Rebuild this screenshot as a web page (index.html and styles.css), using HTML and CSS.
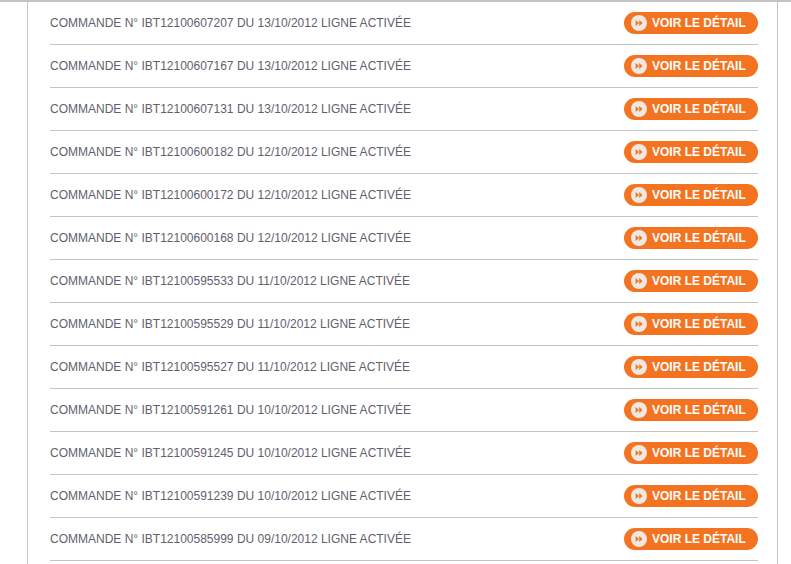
FILE: index.html
```html
<!DOCTYPE html>
<html lang="fr">
<head>
  <meta charset="UTF-8" />
  <title>Mes commandes</title>
  <link rel="stylesheet" href="styles.css">
</head>
<body>
  <main class="panel">
    <ul class="orders">
      <li class="order"><span class="order-text">COMMANDE N° IBT12100607207 DU 13/10/2012 LIGNE ACTIVÉE</span><a class="btn" href="#"><svg class="btn-icon" width="16" height="16" viewBox="0 0 16 16"><circle cx="8" cy="8" r="8" fill="#f0e8e2"/><path d="M4.6 5v6L8 8zM8.2 5v6L11.6 8z" fill="#f47320"/></svg>VOIR LE DÉTAIL</a></li>
      <li class="order"><span class="order-text">COMMANDE N° IBT12100607167 DU 13/10/2012 LIGNE ACTIVÉE</span><a class="btn" href="#"><svg class="btn-icon" width="16" height="16" viewBox="0 0 16 16"><circle cx="8" cy="8" r="8" fill="#f0e8e2"/><path d="M4.6 5v6L8 8zM8.2 5v6L11.6 8z" fill="#f47320"/></svg>VOIR LE DÉTAIL</a></li>
      <li class="order"><span class="order-text">COMMANDE N° IBT12100607131 DU 13/10/2012 LIGNE ACTIVÉE</span><a class="btn" href="#"><svg class="btn-icon" width="16" height="16" viewBox="0 0 16 16"><circle cx="8" cy="8" r="8" fill="#f0e8e2"/><path d="M4.6 5v6L8 8zM8.2 5v6L11.6 8z" fill="#f47320"/></svg>VOIR LE DÉTAIL</a></li>
      <li class="order"><span class="order-text">COMMANDE N° IBT12100600182 DU 12/10/2012 LIGNE ACTIVÉE</span><a class="btn" href="#"><svg class="btn-icon" width="16" height="16" viewBox="0 0 16 16"><circle cx="8" cy="8" r="8" fill="#f0e8e2"/><path d="M4.6 5v6L8 8zM8.2 5v6L11.6 8z" fill="#f47320"/></svg>VOIR LE DÉTAIL</a></li>
      <li class="order"><span class="order-text">COMMANDE N° IBT12100600172 DU 12/10/2012 LIGNE ACTIVÉE</span><a class="btn" href="#"><svg class="btn-icon" width="16" height="16" viewBox="0 0 16 16"><circle cx="8" cy="8" r="8" fill="#f0e8e2"/><path d="M4.6 5v6L8 8zM8.2 5v6L11.6 8z" fill="#f47320"/></svg>VOIR LE DÉTAIL</a></li>
      <li class="order"><span class="order-text">COMMANDE N° IBT12100600168 DU 12/10/2012 LIGNE ACTIVÉE</span><a class="btn" href="#"><svg class="btn-icon" width="16" height="16" viewBox="0 0 16 16"><circle cx="8" cy="8" r="8" fill="#f0e8e2"/><path d="M4.6 5v6L8 8zM8.2 5v6L11.6 8z" fill="#f47320"/></svg>VOIR LE DÉTAIL</a></li>
      <li class="order"><span class="order-text">COMMANDE N° IBT12100595533 DU 11/10/2012 LIGNE ACTIVÉE</span><a class="btn" href="#"><svg class="btn-icon" width="16" height="16" viewBox="0 0 16 16"><circle cx="8" cy="8" r="8" fill="#f0e8e2"/><path d="M4.6 5v6L8 8zM8.2 5v6L11.6 8z" fill="#f47320"/></svg>VOIR LE DÉTAIL</a></li>
      <li class="order"><span class="order-text">COMMANDE N° IBT12100595529 DU 11/10/2012 LIGNE ACTIVÉE</span><a class="btn" href="#"><svg class="btn-icon" width="16" height="16" viewBox="0 0 16 16"><circle cx="8" cy="8" r="8" fill="#f0e8e2"/><path d="M4.6 5v6L8 8zM8.2 5v6L11.6 8z" fill="#f47320"/></svg>VOIR LE DÉTAIL</a></li>
      <li class="order"><span class="order-text">COMMANDE N° IBT12100595527 DU 11/10/2012 LIGNE ACTIVÉE</span><a class="btn" href="#"><svg class="btn-icon" width="16" height="16" viewBox="0 0 16 16"><circle cx="8" cy="8" r="8" fill="#f0e8e2"/><path d="M4.6 5v6L8 8zM8.2 5v6L11.6 8z" fill="#f47320"/></svg>VOIR LE DÉTAIL</a></li>
      <li class="order"><span class="order-text">COMMANDE N° IBT12100591261 DU 10/10/2012 LIGNE ACTIVÉE</span><a class="btn" href="#"><svg class="btn-icon" width="16" height="16" viewBox="0 0 16 16"><circle cx="8" cy="8" r="8" fill="#f0e8e2"/><path d="M4.6 5v6L8 8zM8.2 5v6L11.6 8z" fill="#f47320"/></svg>VOIR LE DÉTAIL</a></li>
      <li class="order"><span class="order-text">COMMANDE N° IBT12100591245 DU 10/10/2012 LIGNE ACTIVÉE</span><a class="btn" href="#"><svg class="btn-icon" width="16" height="16" viewBox="0 0 16 16"><circle cx="8" cy="8" r="8" fill="#f0e8e2"/><path d="M4.6 5v6L8 8zM8.2 5v6L11.6 8z" fill="#f47320"/></svg>VOIR LE DÉTAIL</a></li>
      <li class="order"><span class="order-text">COMMANDE N° IBT12100591239 DU 10/10/2012 LIGNE ACTIVÉE</span><a class="btn" href="#"><svg class="btn-icon" width="16" height="16" viewBox="0 0 16 16"><circle cx="8" cy="8" r="8" fill="#f0e8e2"/><path d="M4.6 5v6L8 8zM8.2 5v6L11.6 8z" fill="#f47320"/></svg>VOIR LE DÉTAIL</a></li>
      <li class="order"><span class="order-text">COMMANDE N° IBT12100585999 DU 09/10/2012 LIGNE ACTIVÉE</span><a class="btn" href="#"><svg class="btn-icon" width="16" height="16" viewBox="0 0 16 16"><circle cx="8" cy="8" r="8" fill="#f0e8e2"/><path d="M4.6 5v6L8 8zM8.2 5v6L11.6 8z" fill="#f47320"/></svg>VOIR LE DÉTAIL</a></li>
    </ul>
  </main>
</body>
</html>
```
FILE: styles.css
```css
* {
  margin: 0;
  padding: 0;
  box-sizing: border-box;
}

html, body {
  height: 564px;
  overflow: hidden;
}

body {
  background: #fff;
  border-top: 2px solid #c4c4c4;
  font-family: 'Liberation Sans', Arial, sans-serif;
  color: #5f5f6e;
}

.panel {
  width: 751px;
  height: 562px;
  margin-left: 27px;
  padding: 0 19px 0 22px;
  border-left: 1px solid #c4c4c4;
  border-right: 1px solid #c4c4c4;
}

.orders {
  list-style: none;
}

.order {
  height: 43px;
  display: flex;
  align-items: center;
  justify-content: space-between;
  border-bottom: 1px solid #c4c4c4;
  padding-bottom: 1px;
}

.order:first-child {
  height: 43px;
}

.order-text {
  font-size: 12px;
}

.btn {
  width: 134px;
  height: 22px;
  display: flex;
  align-items: center;
  gap: 5px;
  padding-left: 7px;
  background: #f47320;
  border-radius: 11px;
  color: #fff;
  font-size: 12px;
  font-weight: bold;
  text-decoration: none;
}

.btn-icon {
  flex: none;
}
```
